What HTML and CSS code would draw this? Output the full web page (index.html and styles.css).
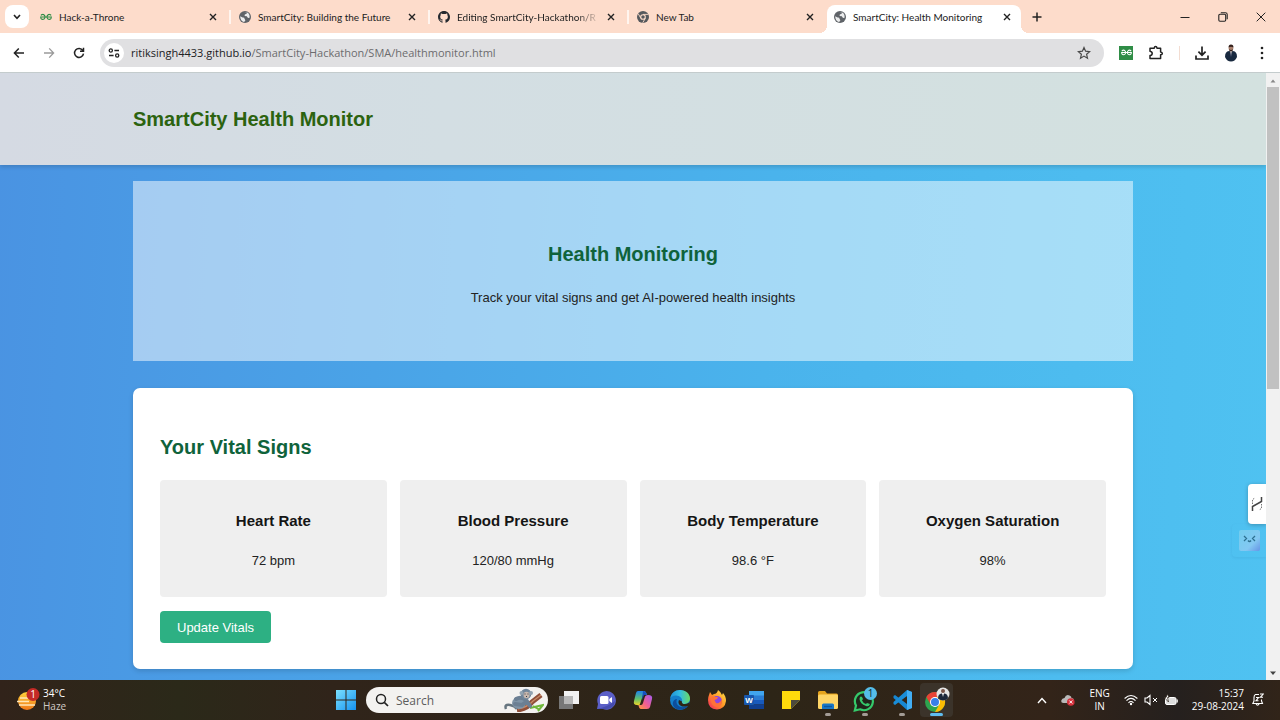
FILE: index.html
```
<!DOCTYPE html>
<html lang="en">
<head>
<meta charset="utf-8">
<title>SmartCity: Health Monitoring</title>
<link rel="stylesheet" href="styles.css">
</head>
<body>
<svg class="defs" width="0" height="0" aria-hidden="true">
  <defs>
    <symbol id="globe" viewBox="0 0 12 12"><circle cx="6" cy="6" r="6" fill="#5f6368"/><path d="M1.2 5.2 3.6 6.6Q5.6 6.4 5.6 8L6.4 9.2Q5.6 10.8 4.9 10.9 1.2 9.8 1.2 5.2ZM5 1.2 8 1.3 7.6 2.8 5.8 3.6 5.6 5 7.8 5.2 9 7 10.6 6.8Q11 3 8.2 1.6L5 1.2Z" fill="#fff" fill-opacity=".88"/></symbol>
    <symbol id="close" viewBox="0 0 8 8"><path d="M1 1 7 7M7 1 1 7" stroke="#222" stroke-width="1.4" fill="none"/></symbol>
    <symbol id="gfg" viewBox="0 0 14 8"><path d="M1 2.2Q3.2 0 5 1.8 6.8 4 5 6 3 7.6 1.2 5.8L.8 4H13.2L12.8 5.8Q11 7.6 9 6 7.2 4 9 1.8 10.8 0 13 2.2" fill="none" stroke="currentColor" stroke-width="1.3"/></symbol>
  </defs>
</svg>

<header class="tabstrip">
  <button class="tab-search" aria-label="Search tabs"><svg width="8" height="6" viewBox="0 0 8 6"><path d="M1 1 4 4.4 7 1" fill="none" stroke="#222" stroke-width="1.6"/></svg></button>
  <nav class="tabs" aria-label="Tabs">
    <div class="tab"><svg class="fav green" viewBox="0 0 14 8"><use href="#gfg"/></svg><span class="tab-title">Hack-a-Throne</span><button class="x" aria-label="Close tab"><svg width="8" height="8"><use href="#close"/></svg></button></div>
    <div class="tab"><svg class="fav"><use href="#globe"/></svg><span class="tab-title">SmartCity: Building the Future</span><button class="x" aria-label="Close tab"><svg width="8" height="8"><use href="#close"/></svg></button></div>
    <div class="tab"><svg class="fav" viewBox="0 0 16 16"><path fill="#24292f" d="M8 0C3.58 0 0 3.58 0 8c0 3.54 2.29 6.53 5.47 7.59.4.07.55-.17.55-.38v-1.49c-2.01.37-2.53-.49-2.69-.94-.09-.23-.48-.94-.82-1.13-.28-.15-.68-.52-.01-.53.63-.01 1.08.58 1.23.82.72 1.21 1.87.87 2.33.66.07-.52.28-.87.51-1.07-1.78-.2-3.64-.89-3.64-3.95 0-.87.31-1.59.82-2.15-.08-.2-.36-1.02.08-2.12 0 0 .67-.21 2.2.82a7.4 7.4 0 0 1 4 0c1.53-1.04 2.2-.82 2.2-.82.44 1.1.16 1.92.08 2.12.51.56.82 1.27.82 2.15 0 3.07-1.87 3.75-3.65 3.95.29.25.54.73.54 1.48v2.2c0 .21.15.46.55.38A8 8 0 0 0 16 8c0-4.42-3.58-8-8-8z"/></svg><span class="tab-title fade">Editing SmartCity-Hackathon/R</span><button class="x" aria-label="Close tab"><svg width="8" height="8"><use href="#close"/></svg></button></div>
    <div class="tab"><svg class="fav" viewBox="0 0 12 12"><circle cx="6" cy="6" r="6" fill="#55585c"/><circle cx="6" cy="6" r="2.3" fill="#55585c" stroke="#fddccb" stroke-width="1.1"/><path d="M6 3.4H11.4M3.8 7.2 1.2 2.7M8.3 7.3 5.7 11.8" stroke="#fddccb" stroke-width=".9"/></svg><span class="tab-title">New Tab</span><button class="x" aria-label="Close tab"><svg width="8" height="8"><use href="#close"/></svg></button></div>
    <div class="tab active"><svg class="fav"><use href="#globe"/></svg><span class="tab-title">SmartCity: Health Monitoring</span><button class="x" aria-label="Close tab"><svg width="8" height="8"><use href="#close"/></svg></button></div>
  </nav>
  <button class="plain new-tab" aria-label="New tab"><svg width="10" height="10" viewBox="0 0 10 10"><path d="M5 .5V9.5M.5 5H9.5" stroke="#222" stroke-width="1.5"/></svg></button>
  <div class="window-controls">
    <button class="plain" aria-label="Minimize"><svg width="10" height="10" viewBox="0 0 10 10"><path d="M.5 5.5H9.5" stroke="#222"/></svg></button>
    <button class="plain" aria-label="Restore"><svg width="10" height="10" viewBox="0 0 10 10"><rect x=".8" y="2.3" width="6.9" height="6.9" rx="1.2" fill="none" stroke="#222" stroke-width="1.1"/><path d="M2.8.8H7.4Q9.2.8 9.2 2.6V7.2" fill="none" stroke="#222" stroke-width="1.1"/></svg></button>
    <button class="plain" aria-label="Close"><svg width="10" height="10" viewBox="0 0 10 10"><path d="M.7.7 9.3 9.3M9.3.7.7 9.3" stroke="#222"/></svg></button>
  </div>
</header>

<div class="toolbar">
  <button class="plain nav-btn" aria-label="Back"><svg width="12" height="12" viewBox="0 0 12 12"><path d="M11 6H1.6M5.8 1.4 1.4 6 5.8 10.6" fill="none" stroke="#222" stroke-width="1.5"/></svg></button>
  <button class="plain nav-btn" aria-label="Forward"><svg width="12" height="12" viewBox="0 0 12 12"><path d="M1 6H10.4M6.2 1.4 10.6 6 6.2 10.6" fill="none" stroke="#9a9a9a" stroke-width="1.3"/></svg></button>
  <button class="plain nav-btn" aria-label="Reload"><svg width="12" height="12" viewBox="0 0 12 12"><path d="M9.8 3.4A4.5 4.5 0 1 0 10.5 6.6M10.5.8V4.2H7" fill="none" stroke="#222" stroke-width="1.5"/></svg></button>
  <div class="omnibox">
    <button class="site-info" aria-label="Site information"><svg width="12" height="10" viewBox="0 0 12 10"><g fill="none" stroke="#222" stroke-width="1.3"><circle cx="2.8" cy="2.5" r="1.6"/><path d="M6.4 2.5H11M1 7.5H5.6"/><circle cx="9.2" cy="7.5" r="1.6"/></g></svg></button>
    <a class="url" href="#"><span class="host">ritiksingh4433.github.io</span>/SmartCity-Hackathon/SMA/healthmonitor.html</a>
    <button class="plain" aria-label="Bookmark"><svg width="14" height="14" viewBox="0 0 14 14"><path d="M7 1.5 8.6 5.2 12.6 5.6 9.6 8.3 10.5 12.2 7 10.1 3.5 12.2 4.4 8.3 1.4 5.6 5.4 5.2Z" fill="none" stroke="#4a4a4a" stroke-width="1.2"/></svg></button>
  </div>
  <div class="extensions">
    <button class="ext-gfg" aria-label="Extension"><svg width="11" height="7"><use href="#gfg"/></svg></button>
    <button class="plain" aria-label="Extensions"><svg width="16" height="16" viewBox="0 0 16 16"><path d="M2 3.2H6.200Q6.400 1.600 7.600 1.600T9 3.200H12.600V7Q14.300 7.200 14.300 8.400T12.600 9.800V13.600H2V10.600Q4.200 10.200 4.200 8.400T2 6.200Z" fill="none" stroke="#222" stroke-width="1.5" stroke-linejoin="round"/></svg></button>
    <span class="divider"></span>
    <button class="plain" aria-label="Downloads"><svg width="14" height="14" viewBox="0 0 14 14"><path d="M7 .5V9M3.4 5.6 7 9.2 10.6 5.6M1 9.6V13H13V9.6" fill="none" stroke="#222" stroke-width="1.7"/></svg></button>
    <button class="plain" aria-label="Profile"><svg width="14" height="18" viewBox="0 0 14 18"><path d="M1 13Q1 7.5 5 7H9Q13 7.500 13 13 11 17.500 7 17.500T1 13Z" fill="#18293f"/><path d="M5.6 6.500H8.400L7 12Z" fill="#dcd4d0"/><path d="M6.600 8H7.400L7.600 12 7 13 6.400 12Z" fill="#35405e"/><ellipse cx="7" cy="4.200" rx="2.300" ry="3" fill="#a87f6d"/><path d="M4.500 3.500Q4.500.500 7 .500T9.500 3.500Q7 1.800 4.500 3.500ZM5 5.300Q7 6.500 9 5.300 8.600 7.500 7 7.500T5 5.300Z" fill="#33211c"/></svg></button>
    <button class="plain menu" aria-label="Menu"><svg width="4" height="14" viewBox="0 0 4 14"><g fill="#222"><circle cx="2" cy="2" r="1.300"/><circle cx="2" cy="7" r="1.300"/><circle cx="2" cy="12" r="1.300"/></g></svg></button>
  </div>
</div>

<div class="viewport">
  <div class="page">
    <header class="site-header"><h1 class="container">SmartCity Health Monitor</h1></header>
    <main class="container">
      <section class="hero">
        <h2>Health Monitoring</h2>
        <p>Track your vital signs and get AI-powered health insights</p>
      </section>
      <section class="panel">
        <h2>Your Vital Signs</h2>
        <div class="vitals">
          <article class="vital"><h3>Heart Rate</h3><p>72 bpm</p></article>
          <article class="vital"><h3>Blood Pressure</h3><p>120/80 mmHg</p></article>
          <article class="vital"><h3>Body Temperature</h3><p>98.6 °F</p></article>
          <article class="vital"><h3>Oxygen Saturation</h3><p>98%</p></article>
        </div>
        <button class="update">Update Vitals</button>
      </section>
    </main>
    <aside class="side-widgets">
      <button class="widget-tab" aria-label="Sidebar"><svg width="12" height="16" viewBox="0 0 12 16"><path d="M1.500 15V10.500L10.500 5.500V1" fill="none" stroke="#444" stroke-width="1.500"/><path d="M1.500 8V3.500L4 2M10.500 8V12.500L8 14" fill="none" stroke="#777" stroke-dasharray="1.500 1"/></svg></button>
      <button class="widget-bot" aria-label="Assistant"><svg width="21" height="21" viewBox="0 0 21 21"><defs><linearGradient id="bot" x1="0" y1="0" x2="1" y2="1"><stop offset="0" stop-color="#72cdee"/><stop offset=".65" stop-color="#83c8f2"/><stop offset="1" stop-color="#6694e6"/></linearGradient></defs><rect width="21" height="21" rx="2" fill="url(#bot)"/><path d="M5 6 7.500 8.500 5 11M16 6 13.500 8.500 16 11M9 10.500Q10.500 12.500 12 10.500" fill="none" stroke="#2d7090" stroke-width="1.300"/></svg></button>
    </aside>
  </div>
  <div class="scrollbar" aria-hidden="true">
    <svg width="8" height="5" viewBox="0 0 8 5"><path d="M1.500 4.500 4 1.500 6.500 4.500Z" fill="#888"/></svg>
    <div class="track"><div class="thumb"></div></div>
    <svg width="8" height="5" viewBox="0 0 8 5"><path d="M1 .5H7L4 4Z" fill="#444"/></svg>
  </div>
</div>

<footer class="taskbar">
  <button class="weather"><svg width="25" height="25" viewBox="0 0 25 25"><defs><linearGradient id="sun" x1="0" y1="0" x2="0" y2="1"><stop offset="0" stop-color="#ffd23c"/><stop offset="1" stop-color="#f07818"/></linearGradient></defs><circle cx="11" cy="13" r="9" fill="url(#sun)"/><path d="M4 10H15M1 13.500H13M3 17H19" stroke="#ffe6b8" stroke-width="1.400"/><circle cx="17" cy="6.500" r="6.500" fill="#c42b26"/><text x="17" y="10" text-anchor="middle" class="badge-text light">1</text></svg><span class="two-line"><span>34°C</span><span class="muted">Haze</span></span></button>

  <div class="dock">
    <button class="app" aria-label="Start"><svg width="20" height="20" viewBox="0 0 20 20"><defs><linearGradient id="win" x1="0" y1="0" x2="1" y2="1"><stop offset="0" stop-color="#7be0fd"/><stop offset="1" stop-color="#1592f0"/></linearGradient></defs><path d="M0 0H9.500V9.500H0ZM10.500 0H20V9.500H10.500ZM0 10.500H9.500V20H0ZM10.500 10.500H20V20H10.500Z" fill="url(#win)"/></svg></button>
    <label class="search"><svg width="14" height="14" viewBox="0 0 14 14"><circle cx="6" cy="6" r="4.500" fill="none" stroke="#222" stroke-width="1.500"/><path d="M9.300 9.300 13 13" stroke="#222" stroke-width="1.700"/></svg><input type="text" placeholder="Search" aria-label="Search"><svg width="40" height="24" viewBox="0 0 40 24"><path d="M26 20 39 17 34 23M29 18 36 22" stroke="#70b83c" stroke-width="2" fill="none"/><path d="M13 22Q23 21 28 14L37 7" fill="none" stroke="#8f4f39" stroke-width="5"/><path d="M14 21Q24 19 29 13L37 7" fill="none" stroke="#c98b68" stroke-width="1.200"/><path d="M2 21Q0 16 6 17 11 18 13 21" fill="none" stroke="#66757f" stroke-width="2.500"/><ellipse cx="15" cy="15" rx="7" ry="6" fill="#7e93a6"/><path d="M12 11Q17 8 22 12L26 18M11 16 18 17 23 13" fill="none" stroke="#6b7f93" stroke-width="4" stroke-linecap="round"/><circle cx="22" cy="6" r="5.300" fill="#71869b"/><circle cx="17.500" cy="5" r="2" fill="#92a3b1"/><circle cx="27" cy="5" r="2" fill="#92a3b1"/><ellipse cx="22.500" cy="7" rx="3" ry="3.300" fill="#c8b8ae"/><path d="M20.500 6H21.500M23.500 6H24.500M22 8.500H23" stroke="#343a45"/></svg></label>
    <button class="app" aria-label="Task view"><svg width="22" height="20" viewBox="0 0 22 20"><rect x="6" y="1" width="15" height="13" fill="#f2f2f2"/><rect x="1" y="6" width="14" height="13" fill="#777"/><rect x="6" y="6" width="9" height="8" fill="#b8b8b8"/></svg></button>
    <button class="app" aria-label="Chat"><svg width="20" height="20" viewBox="0 0 20 20"><path d="M1 19 2 14A9.300 9.300 0 1 1 7 19Z" fill="#5b5fc7"/><path d="M10 19Q18 19 19 11 11 17 1 19Z" fill="#454cae"/><rect x="4" y="6" width="8.500" height="8" rx="1.500" fill="#fff"/><path d="M13.300 9 16 7V13L13.300 11Z" fill="#fff"/></svg></button>
    <button class="app" aria-label="Copilot"><svg width="20" height="20" viewBox="0 0 20 20"><defs><linearGradient id="ca" x1="0" y1="0" x2="0" y2="1"><stop offset="0" stop-color="#1c81ed"/><stop offset=".55" stop-color="#60c06b"/><stop offset="1" stop-color="#f5d525"/></linearGradient><linearGradient id="cb" x1="1" y1="0" x2="0" y2="1"><stop offset="0" stop-color="#a45bef"/><stop offset=".55" stop-color="#f15e92"/><stop offset="1" stop-color="#ff9b38"/></linearGradient></defs><path d="M5 1H11Q13 1 14 5H10L7 14Q6.500 16 4 15 0 15 1 11L3 3Q3.500 1 5 1Z" fill="url(#ca)"/><path d="M15 5Q20 5 19 9L17 17Q16.500 19 14 19H8Q6 19 5.500 15H8Q9.500 15 10 13L12 6.500Q12.500 5 15 5Z" fill="url(#cb)"/><path d="M10 1Q13 1 14 5H11L9 10Z" fill="#174fbe"/></svg></button>
    <button class="app" aria-label="Edge"><svg width="20" height="20" viewBox="0 0 20 20"><defs><linearGradient id="ed" x1="0" y1="0" x2="1" y2="0"><stop offset="0" stop-color="#208fd5"/><stop offset=".5" stop-color="#32bde2"/><stop offset="1" stop-color="#6bda62"/></linearGradient></defs><circle cx="10" cy="10" r="10" fill="#147fcb"/><path d="M0 9C1 3 5 0 10 0 16 0 20 4 20 8.500 20 12 17 14 14 14 11 14 11 12.500 12 11.500 13 9 10 5.500 6 5.500 3 5.500 1 7 0 9Z" fill="url(#ed)"/><path d="M7 9C5 14 9 18 14 17L18 15.500C15 21 7 21 4 17 1 13 4 9 7 9Z" fill="#0d4e9b"/><path d="M12 11.500C11 14 15 15 18.500 13L19.500 12 20 17 17 16C11 18 7 14 9 10Z" fill="#2e2416"/></svg></button>
    <button class="app" aria-label="Firefox"><svg width="20" height="20" viewBox="0 0 20 20"><defs><linearGradient id="ff" x1="1" y1="0" x2="0" y2="1"><stop offset="0" stop-color="#ffe84b"/><stop offset=".5" stop-color="#ff9425"/><stop offset="1" stop-color="#f51d65"/></linearGradient></defs><path d="M2 5 3 2 5 5 7 4Q10 4 11 0 14 2 15 5L16 3Q19 6 19 11 18 19 10 19.500 1 19 1 10 1 7 2 5Z" fill="url(#ff)"/><circle cx="10" cy="11" r="5" fill="#8c45df"/><path d="M5 6 8 7 11 7 10 9 7.500 10 9 13Q13 14 15 9 16 16 10 17 4 16 4 10Z" fill="#ff7138"/></svg></button>
    <button class="app" aria-label="Word"><svg width="20" height="20" viewBox="0 0 20 20"><path d="M5 1H20V6H5Z" fill="#41a5ee"/><path d="M5 5.500H20V10H5Z" fill="#2b7cd3"/><path d="M5 10H20V14.500H5Z" fill="#185abd"/><path d="M5 14.500H20V19H5Z" fill="#103f91"/><rect y="5" width="10" height="10" rx="1" fill="#1857ad"/><text x="5" y="13" text-anchor="middle" class="word-text">W</text></svg></button>
    <button class="app" aria-label="Sticky Notes"><svg width="18" height="18" viewBox="0 0 18 18"><path d="M0 0H18V9L9 18H0Z" fill="#ffdb0c"/><path d="M9 18V9H18Z" fill="#4c4a3e"/></svg></button>
    <button class="app running" aria-label="File Explorer"><svg width="20" height="18" viewBox="0 0 20 18"><path d="M0 1.500Q0 0 1.500 0H7L9 2.500H18.500Q20 2.500 20 4V8H0Z" fill="#e6a41d"/><rect y="3.500" width="20" height="14.500" rx="1.500" fill="#ffd566"/><path d="M4 18V14Q4 12.500 5.500 12.500H14.500Q16 12.500 16 14V18Z" fill="#1976c5"/><path d="M6 15.500H14" stroke="#0d559d" stroke-width="1.300"/></svg></button>
    <button class="app running" aria-label="WhatsApp"><svg width="24" height="26" viewBox="0 0 24 26"><path d="M1.800 23.500 3 18.500A9 9 0 1 1 7 22.300Z" fill="#20251a" stroke="#35c96a" stroke-width="2.200"/><path d="M7 10Q8 9 9 10L10 12 9 13.500Q10 16 13 17L14 16 17 17Q16 20 13 19 7 17 6.500 12Z" fill="#35c96a"/><circle cx="17.500" cy="6.500" r="6.500" fill="#55bde9"/><text x="17.500" y="10" text-anchor="middle" class="badge-text">1</text></svg></button>
    <button class="app running" aria-label="Visual Studio Code"><svg width="20" height="20" viewBox="0 0 20 20"><path d="M15 0 20 2V18L15 20 1.500 8V6L3 5 15 14Z" fill="#1787d2"/><path d="M15 20V0L1.500 12V14L3 15 15 6Z" fill="#198dd9"/><path d="M15 0 20 2V18L15 20Z" fill="#42aef4"/></svg></button>
    <button class="app running current" aria-label="Chrome"><svg width="26" height="26" viewBox="0 0 26 26"><circle cx="11" cy="15" r="10" fill="#2da44e"/><path d="M2.300 10A10 10 0 0 1 19.700 10H11L6.700 17.500Z" fill="#e94335"/><path d="M19.700 10A10 10 0 0 1 11 25L15.300 17.500 11 10Z" fill="#fbbc04"/><circle cx="11" cy="15" r="5" fill="#fff"/><circle cx="11" cy="15" r="4" fill="#397fe8"/><circle cx="19" cy="7" r="6.500" fill="#e5e5e5"/><path d="M14 11.500Q14 7 17.500 6.500H20.500Q24 7 24 11.500 19 15.500 14 11.500Z" fill="#1c283b"/><path d="M18 6H20L19 10Z" fill="#fff"/><circle cx="19" cy="4" r="2" fill="#795447"/></svg></button>
  </div>

  <div class="tray">
    <button class="plain" aria-label="Hidden icons"><svg width="10" height="7" viewBox="0 0 10 7"><path d="M1 6 5 1.500 9 6" fill="none" stroke="#fff" stroke-width="1.400"/></svg></button>
    <button class="plain" aria-label="OneDrive"><svg width="14" height="12" viewBox="0 0 14 12"><path d="M2.500 9Q0 9 .3 6.500 1 4 3.500 4 5 0 8.500 1.500 10.500 2 10.500 4 13 4 13 7L8 9Z" fill="#b9b9b9"/><circle cx="9.800" cy="8" r="3.800" fill="#d6303b"/><path d="M8.300 6.500 11.300 9.500M11.300 6.500 8.300 9.500" stroke="#fff"/></svg></button>
    <button class="two-line lang"><span>ENG</span><span>IN</span></button>
    <button class="status" aria-label="Network, sound and battery"><svg width="14" height="12" viewBox="0 0 14 12"><path d="M.6 4.500Q7-1.500 13.400 4.500M2.500 6.700Q7 2.200 11.500 6.700M4.500 8.800Q7 6.200 9.500 8.800" fill="none" stroke="#fff" stroke-width="1.100"/><circle cx="7" cy="10" r="1.200" fill="#fff"/></svg><svg width="14" height="12" viewBox="0 0 14 12"><path d="M1 4H3L6 1.500V10.500L3 8H1Z" fill="none" stroke="#fff" stroke-width="1.100"/><path d="M9 4 13 8M13 4 9 8" stroke="#fff"/></svg><svg width="14" height="12" viewBox="0 0 14 12"><rect x="1.500" y="3.500" width="10.500" height="7" rx="1.500" fill="#ddd" stroke="#fff"/><path d="M12.500 5.500H13.800V8.500H12.500" fill="#fff"/><path d="M3.500 0 5 3.500H3.500L4.500 8 .3 3.500H2Z" fill="#fff" stroke="#2b2118" stroke-width=".7"/></svg></button>
    <button class="two-line clock"><span>15:37</span><span>29-08-2024</span></button>
    <button class="plain" aria-label="Notifications"><svg width="12" height="14" viewBox="0 0 12 14"><path d="M7 1.500H3.500Q2 2 2 4.500V8L.8 10.500H10.500L9.500 8V6.500M4 10.500Q5.500 14 7.300 10.500M4 4.500H6.500L4 7.800H6.500M8 1H11.300L8.300 4.300H11" fill="none" stroke="#fff" stroke-width="1.100"/></svg></button>
  </div>
</footer>
</body>
</html>
```
FILE: styles.css
```
* { box-sizing: border-box; }

body {
  margin: 0;
  height: 100vh;
  display: flex;
  flex-direction: column;
  overflow: hidden;
  font-family: "Open Sans", "Noto Sans", sans-serif;
  font-size: 11px;
  color: #222;
  background: #fff;
}

.defs { position: absolute; }
svg { display: block; flex: none; }
h1, h2, h3, p { margin: 0; }

button {
  font: inherit;
  color: inherit;
  border: 0;
  padding: 0;
  background: none;
  display: flex;
  align-items: center;
  justify-content: center;
}

/* Tab strip */
.tabstrip {
  flex: none;
  height: 33px;
  display: flex;
  align-items: center;
  padding-left: 5px;
  background: #fddccb;
}

.tab-search {
  width: 24px;
  height: 23px;
  border-radius: 8px;
  background: #fff;
}

.tabs {
  display: flex;
  align-self: stretch;
  align-items: center;
  min-width: 0;
}

.tab {
  width: 199px;
  height: 28px;
  display: flex;
  align-items: center;
  gap: 7px;
  padding: 0 11px;
  position: relative;
}

.tab:nth-child(-n+3)::after {
  content: "";
  position: absolute;
  right: -3px;
  top: 7px;
  width: 2px;
  height: 14px;
  background: #fff5ef;
}

.tab.active {
  width: 194px;
  margin-left: 2px;
  align-self: flex-end;
  background: #fff;
  border-radius: 8px 8px 0 0;
  padding: 0 10px 5px 7px;
}

.tab.active::before,
.tab.active::after {
  content: "";
  position: absolute;
  bottom: 0;
  width: 8px;
  height: 8px;
}

.tab.active::before {
  left: -8px;
  background: radial-gradient(circle at 0 0, transparent 8px, #fff 8px);
}

.tab.active::after {
  right: -8px;
  background: radial-gradient(circle at 100% 0, transparent 8px, #fff 8px);
}

.fav { width: 12px; height: 12px; }
.fav.green { color: #2f8d46; }

.tab-title {
  flex: 1;
  min-width: 0;
  font-family: Lato, "Open Sans", sans-serif;
  font-size: 10px;
  overflow: hidden;
  white-space: nowrap;
}

.tab-title.fade {
  mask-image: linear-gradient(90deg, #000 84%, transparent);
}

.new-tab { width: 32px; height: 28px; }

.window-controls {
  display: flex;
  margin-left: auto;
}

.window-controls button { width: 38px; height: 28px; }

/* Toolbar */
.toolbar {
  flex: none;
  height: 40px;
  display: flex;
  align-items: center;
  padding: 0 16px 0 4px;
  background: #fff;
  border-bottom: 1px solid #c4cccd;
}

.nav-btn { width: 30px; height: 28px; }

.omnibox {
  flex: 1;
  height: 28px;
  display: flex;
  align-items: center;
  margin-left: 6px;
  padding: 0 13px 0 4px;
  border-radius: 14px;
  background: #e0e0e2;
}

.site-info {
  width: 20px;
  height: 20px;
  border-radius: 50%;
  background: #fff;
}

.url {
  flex: 1;
  padding-left: 7px;
  font-size: 11px;
  color: #6c6c6e;
  text-decoration: none;
}

.host { color: #202124; }

.extensions {
  display: flex;
  align-items: center;
  gap: 15px;
  padding-left: 15px;
}

.ext-gfg {
  width: 14px;
  height: 14px;
  color: #fff;
  background: #2f8d46;
}

.divider {
  width: 1px;
  height: 14px;
  background: #f3ddd2;
}

.menu { margin-left: 7px; }

/* Web page */
.viewport {
  flex: 1;
  min-height: 0;
  display: flex;
}

.page {
  flex: 1;
  min-width: 0;
  position: relative;
  overflow: hidden;
  font-family: "Liberation Sans", Arial, sans-serif;
  font-size: 13px;
  line-height: 21px;
  background: linear-gradient(93deg, #4a93e2, #4ab3ec 60%, #4fc2f1);
}

.container {
  width: calc(100% - 32px);
  max-width: 1000px;
  margin: 0 auto;
}

.site-header {
  padding: 30px 0;
  background: linear-gradient(90deg, #d5dae3, #d3dee3 35%, #d3e1df);
  box-shadow: 0 2px 4px rgba(0, 0, 0, .15);
}

.site-header h1 {
  font-size: 20px;
  line-height: 32px;
  color: #2c6310;
}

.hero,
.panel {
  display: flex;
  flex-direction: column;
}

.hero {
  align-items: center;
  gap: 16px;
  margin-top: 16px;
  padding: 57px 24px 53px;
  background: rgba(255, 255, 255, .5);
}

.page h2 {
  font-size: 20px;
  line-height: 33px;
  color: #0f633b;
}

.panel {
  margin-top: 27px;
  padding: 43px 27px 26px;
  border-radius: 7px;
  background: #fff;
  box-shadow: 0 2px 5px rgba(0, 0, 0, .15);
}

.vitals {
  display: grid;
  grid-template-columns: repeat(4, 1fr);
  gap: 13px;
  margin: 16px 0 14px;
}

.vital {
  padding: 30px 13px 26px;
  border-radius: 4px;
  text-align: center;
  background: #efefef;
}

.vital h3 {
  margin-bottom: 19px;
  font-size: 15px;
  line-height: 21px;
  color: #151515;
}

.update {
  align-self: flex-start;
  height: 32px;
  padding: 0 17px;
  border-radius: 4px;
  color: #fff;
  background: #2db083;
}

.side-widgets {
  position: absolute;
  right: 0;
  top: 411px;
  display: flex;
  flex-direction: column;
  align-items: flex-end;
}

.widget-tab {
  width: 18px;
  height: 40px;
  border-radius: 4px 0 0 4px;
  background: #fff;
  box-shadow: 0 1px 4px rgba(0, 0, 0, .25);
}

.widget-bot {
  width: 34px;
  height: 33px;
  border-radius: 4px 0 0 4px;
  box-shadow: 0 1px 3px rgba(0, 60, 120, .08);
}

.scrollbar {
  width: 14px;
  display: flex;
  flex-direction: column;
  align-items: center;
  gap: 4px;
  padding: 5px 0 4px;
  background: #f1f1f1;
}

.track { flex: 1; align-self: stretch; padding: 0 1px; }
.thumb { height: 52%; background: #c1c1c1; }

/* Taskbar */
.taskbar {
  flex: none;
  height: 40px;
  display: grid;
  grid-template-columns: 1fr auto 1fr;
  align-items: center;
  padding: 0 16px;
  color: #fff;
  font-size: 10px;
  line-height: 13px;
  background: linear-gradient(90deg, #31231a, #2b2919 14%, #30241a 26%, #2d2517 60%, #332419 82%, #25201e 92%, #312419);
}

.weather { justify-self: start; gap: 2px; }

.two-line {
  display: flex;
  flex-direction: column;
  align-items: flex-start;
}

.muted { color: #cfc9c4; }

.badge-text {
  font: 10px "Open Sans", sans-serif;
  fill: #14262e;
}

.badge-text.light { fill: #fff; }
.word-text { font: bold 8px "Liberation Sans", sans-serif; fill: #fff; }

.dock {
  display: flex;
  align-items: center;
}

.app {
  width: 37px;
  height: 40px;
  position: relative;
}

.running::after {
  content: "";
  position: absolute;
  bottom: 4px;
  width: 6px;
  height: 3px;
  border-radius: 2px;
  background: #a39c96;
}

.app.current {
  width: 33px;
  height: 34px;
  border-radius: 4px;
  background: #3b332a;
}

.app.current::after {
  bottom: 1px;
  width: 13px;
  background: #5fbdf0;
}

.search {
  width: 182px;
  height: 26px;
  display: flex;
  align-items: center;
  margin: 0 2px;
  padding: 0 4px 0 9px;
  border-radius: 13px;
  background: #f3f2f0;
}

.search input {
  flex: 1;
  min-width: 0;
  padding: 0 7px;
  border: 0;
  outline: 0;
  background: none;
  font: 12px "Open Sans", sans-serif;
}

.search input::placeholder { color: #5c5c5c; opacity: 1; }

.tray {
  justify-self: end;
  display: flex;
  align-items: center;
  gap: 14px;
}

.lang { align-items: center; }
.status { gap: 6px; }
.clock { align-items: flex-end; margin-right: -6px; }
```
